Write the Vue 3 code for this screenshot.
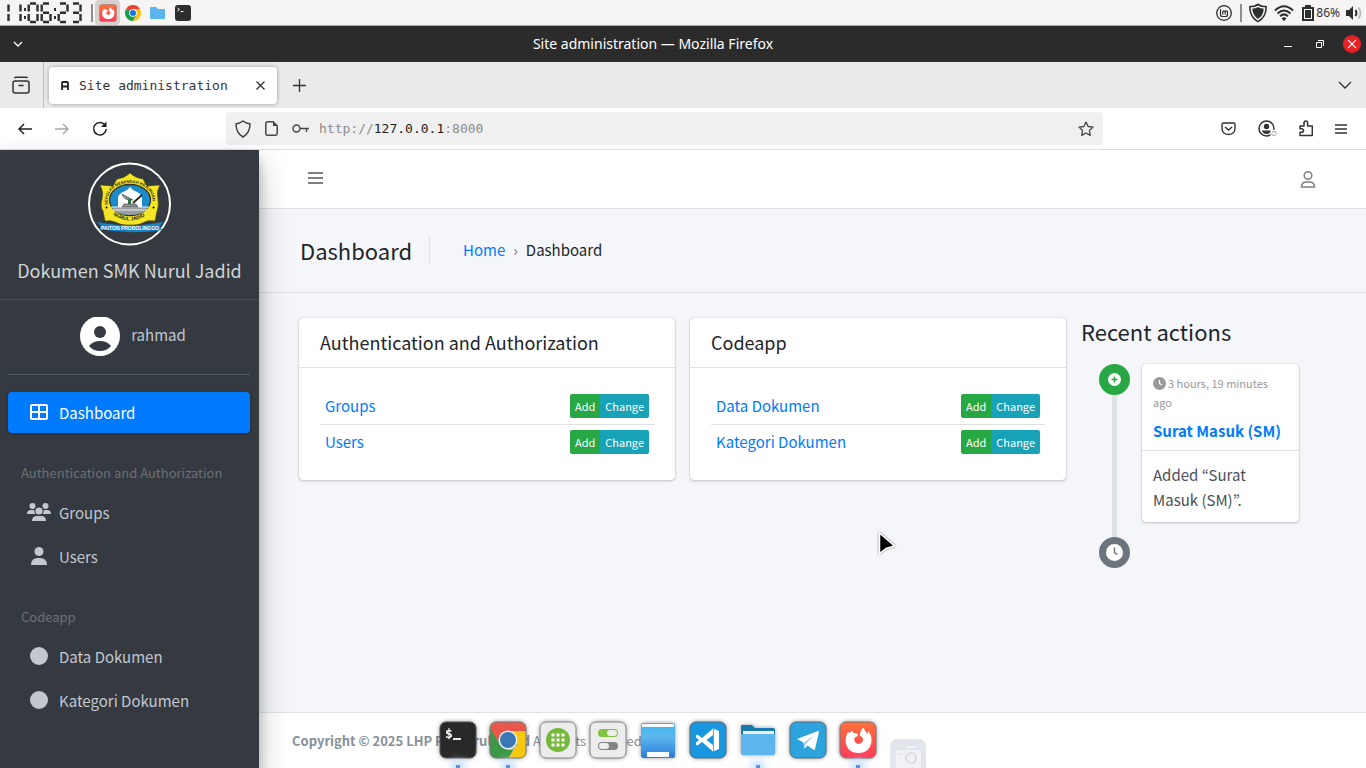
<script setup>
const digits = { 1: 'bc', 2: 'abged', 3: 'abgcd', 6: 'afgedc', 0: 'abcdef' }
const seg = {
  a: 'M2 1H8', b: 'M9.5 2V9', c: 'M9.5 11.5V18.5', d: 'M2 19.5H8',
  e: 'M0.7 11.5V18.5', f: 'M0.7 2V9', g: 'M2 10.2H8'
}
const clock = [
  { n: 1, x: -1 }, { n: 1, x: 11 }, { n: 0, x: 28 }, { n: 6, x: 41 }, { n: 2, x: 58 }, { n: 3, x: 71 }
].map(d => ({ x: d.x, d: digits[d.n].split('').map(s => seg[s]).join('') }))
const cards = [
  { title: 'Authentication and Authorization', rows: ['Groups', 'Users'] },
  { title: 'Codeapp', rows: ['Data Dokumen', 'Kategori Dokumen'] }
]
</script>

<template>
  <div class="desktop">
    <header class="panel">
      <div class="panel-left">
        <svg class="clock" width="84" height="22" viewBox="0 0 84 22" role="img" aria-label="11:06:23">
          <g fill="none" stroke="#2b2f2f" stroke-width="2.400">
            <path v-for="(c, i) in clock" :key="i" :transform="`translate(${c.x} 0.5)`" :d="c.d" />
          </g>
          <path d="M24 6h2v3h-2zM24 14h2v3h-2zM54 6h2v3h-2zM54 14h2v3h-2z" fill="#2b2f2f" />
        </svg>
        <span class="bar"></span>
        <button class="launcher on" aria-label="Firefox"><svg width="18" height="18"><use href="#firefox" /></svg></button>
        <button class="launcher" aria-label="Chrome">
          <svg width="16" height="16" viewBox="0 0 36 36">
            <path d="M18 18 2.400 9A18 18 0 0 1 33.600 9z" fill="#ea4335" />
            <path d="M18 18 2.400 9A18 18 0 0 0 18 36l8-13z" fill="#1e9e4b" />
            <path d="M18 9h15.600A18 18 0 0 1 18 36l8-13z" fill="#fbc116" />
            <circle cx="18" cy="18" r="8.600" fill="#fff" /><circle cx="18" cy="18" r="6.800" fill="#1a73e8" />
          </svg>
        </button>
        <button class="launcher" aria-label="Files">
          <svg width="15" height="12" viewBox="0 0 15 12"><path d="M0 1q0-1 1-1h5l2 2h6q1 0 1 1v8q0 1-1 1H1q-1 0-1-1z" fill="#5ab6ec" /></svg>
        </button>
        <button class="launcher" aria-label="Terminal">
          <svg width="16" height="16" viewBox="0 0 16 16"><rect width="16" height="16" rx="3" fill="#2d2d2d" /><path d="M2.500 3 4.500 4.500 2.500 6M5.500 6.500h3" fill="none" stroke="#fff" stroke-width="1" /></svg>
        </button>
      </div>
      <div class="panel-right">
        <svg width="16" height="16" viewBox="0 0 16 16" fill="none" stroke="#2b2f2f"><circle cx="8" cy="8" r="7.300" stroke-width="1.300" /><path d="M4.500 4v5.500q0 2 2 2h3q2 0 2-2V7q0-1.200-1.200-1.200T9.200 7v2.500M6.800 9.500V7q0-1.200 1.200-1.200T9.200 7" stroke-width="1.200" /></svg>
        <span class="bar"></span>
        <svg width="20" height="20" viewBox="0 0 20 20"><path d="M10 .5q4 2.500 9 2.500 0 12-9 16.500Q1 15 1 3q5 0 9-2.500z" fill="#2b2f2f" /><path d="M10 3.300q3 1.700 6.500 1.800 0 8-6.500 11.700Q3.500 13 3.500 5.100 7 5 10 3.300z" fill="none" stroke="#f6f5f4" stroke-width="1.500" /></svg>
        <svg width="20" height="18" viewBox="0 0 20 18" fill="none" stroke="#2b2f2f" stroke-width="2"><path d="M1 6.500Q10-2 19 6.500M3.500 9.500q6.500-6 13 0M6 12.200q4-3.600 8 0" /><path d="m7.500 14.200 2.500 3 2.500-3q-2.500-1.700-5 0z" fill="#2b2f2f" stroke="none" /></svg>
        <svg class="battery" width="12" height="16" viewBox="0 0 12 16"><path d="M1 3h10v12H1zM4 2V1h4v1" fill="none" stroke="#2b2f2f" stroke-width="2" /><path d="M3 5h6v8H3z" fill="#2b2f2f" /></svg>
        <span class="percent">86%</span>
        <svg width="16" height="16" viewBox="0 0 16 16"><path d="M0 5h3l4-4v14l-4-4H0z" fill="#2b2f2f" /><path d="M9.500 5q2 3 0 6" fill="none" stroke="#2b2f2f" stroke-width="2" /><path d="M12.500 2.500q4 5.500 0 11" fill="none" stroke="#bbb" stroke-width="2" /></svg>
      </div>
    </header>

    <div class="titlebar">
      <button aria-label="Window menu"><svg width="10" height="6" viewBox="0 0 10 6"><path d="m1 1 4 4 4-4" fill="none" stroke="#fff" stroke-width="1.300" /></svg></button>
      <span class="wintitle">Site administration — Mozilla Firefox</span>
      <div class="winbtns">
        <button aria-label="Minimise"><svg width="8" height="8"><path d="M0 6.500h8" stroke="#fff" /></svg></button>
        <button aria-label="Restore"><svg width="8" height="8"><path d="M.5 2.500h5v5h-5zM2 .5h5.500V6" fill="none" stroke="#fff" /></svg></button>
        <button class="close" aria-label="Close"><svg width="8" height="8"><path d="m0 0 8 8M8 0 0 8" stroke="#fff" stroke-width="1.200" /></svg></button>
      </div>
    </div>

    <div class="tabstrip">
      <button class="recent" aria-label="Recent browsing">
        <svg width="18" height="18" viewBox="0 0 18 18" fill="none" stroke="#333" stroke-width="1.500"><rect x="1" y="5" width="16" height="12" rx="2" /><path d="M2.500 2q.5-.8 1.500-.8h10q1 0 1.500.8M6.500 9.500h5" /></svg>
      </button>
      <div class="tab">
        <svg width="8" height="9" viewBox="0 0 8 9"><path d="M1 9V2q0-1 1-1h4q1 0 1 1v7M1 5.500h6" fill="none" stroke="#222" stroke-width="1.800" /></svg>
        <span>Site administration</span>
        <button aria-label="Close tab"><svg width="9" height="9"><path d="m.5.5 8 8M8.500.5l-8 8" stroke="#333" stroke-width="1.300" /></svg></button>
      </div>
      <button class="newtab" aria-label="New tab"><svg width="13" height="13"><path d="M6.500 0v13M0 6.500h13" stroke="#333" stroke-width="1.300" /></svg></button>
      <button class="alltabs" aria-label="List all tabs"><svg width="14" height="8"><path d="m1 1 6 6 6-6" fill="none" stroke="#333" stroke-width="1.400" /></svg></button>
    </div>

    <div class="toolbar">
      <div class="nav">
        <button aria-label="Back"><svg width="14" height="12" viewBox="0 0 14 12"><path d="M14 6H1M6 1 1 6l5 5" fill="none" stroke="#222" stroke-width="1.500" /></svg></button>
        <button aria-label="Forward"><svg width="14" height="12" viewBox="0 0 14 12"><path d="M0 6h13M8 1l5 5-5 5" fill="none" stroke="#aaa" stroke-width="1.500" /></svg></button>
        <button aria-label="Reload"><svg width="16" height="16" viewBox="0 0 16 16"><path d="M13 4A6.300 6.300 0 1 0 14.200 8" fill="none" stroke="#222" stroke-width="1.500" /><path d="M9 6h5.500V.5z" fill="#222" /></svg></button>
      </div>
      <div class="urlbar">
        <svg width="16" height="18" viewBox="0 0 16 18" fill="none" stroke="#444" stroke-width="1.500" stroke-linejoin="round"><path d="M8 1q3 2.500 7 2.700 0 9.300-7 13.300Q1 13 1 3.700 5 3.500 8 1z" /></svg>
        <svg width="13" height="15" viewBox="0 0 13 15"><path d="M2.500.8H8L12.200 5v7.500q0 1.700-1.700 1.700h-8q-1.700 0-1.700-1.700v-10Q.8.800 2.500.800z" fill="none" stroke="#444" stroke-width="1.500" /><path d="M8 0v5h5z" fill="#444" /></svg>
        <svg width="17" height="9" viewBox="0 0 17 9" fill="none" stroke="#444" stroke-width="1.400"><circle cx="4.500" cy="4.500" r="3.500" /><path d="M8 4.500h9M14.500 4.500V8" /></svg>
        <div class="url" role="textbox" aria-label="Address">http://<b>127.0.0.1</b>:8000</div>
        <button aria-label="Bookmark"><svg width="16" height="16" viewBox="0 0 16 16"><path d="m8 1 2.100 4.500 4.900.6-3.600 3.400.9 4.900L8 12l-4.300 2.400.9-4.900L1 6.100l4.900-.6z" fill="none" stroke="#444" stroke-width="1.300" stroke-linejoin="round" /></svg></button>
      </div>
      <div class="tools">
        <button aria-label="Pocket"><svg width="15" height="14" viewBox="0 0 15 14" fill="none" stroke="#333" stroke-width="1.400"><path d="M2.500 1h10Q14 1 14 2.500V6q0 6.500-6.500 6.500T1 6V2.500Q1 1 2.500 1z" /><path d="m4 5 3.500 3L11 5" /></svg></button>
        <button aria-label="Account"><svg width="19" height="17" viewBox="0 0 19 17"><circle cx="8.500" cy="8.500" r="7.500" fill="none" stroke="#333" stroke-width="1.500" /><circle cx="8.500" cy="6.500" r="2.700" fill="#333" /><path d="M4 10.500h9q-1 3.500-4.500 3.500T4 10.500z" fill="#333" /><circle cx="16" cy="13.500" r="3.800" fill="#fff" /><circle cx="16" cy="13.500" r="2.200" fill="none" stroke="#aaa" /></svg></button>
        <button aria-label="Extensions"><svg width="14" height="17" viewBox="0 0 14 17"><path d="M1 15.500V12.300h1.500q2 0 2-1.800t-2-1.800H1V6h4V3q0-2 1.800-2t1.800 2v3h4.700v9.500z" fill="none" stroke="#333" stroke-width="1.500" stroke-linejoin="round" /></svg></button>
        <button aria-label="Menu"><svg width="12" height="10"><path d="M0 1h12M0 5h12M0 9h12" stroke="#333" stroke-width="1.300" /></svg></button>
      </div>
    </div>

    <div class="page">
      <aside class="sidebar">
        <a class="brand" href="#">
          <svg width="84" height="84" viewBox="0 0 84 84">
            <circle cx="41.500" cy="42" r="40.500" fill="none" stroke="#fff" stroke-width="2" />
            <path d="M42 11q5 5 13 6l4 7 13-1q-4 7-2 14 1 8-1 12l-2 10q-8-1-10 1-7 4-15 3-8 1-15-3-4-2-10-1l-2-10q-3-4-1-12 2-7-2-14l13 1 4-7q8-1 13-6z" fill="#f4e622" stroke="#413f20" stroke-width=".6" />
            <ellipse cx="42" cy="38" rx="20.500" ry="15.500" fill="#1f8acb" stroke="#35351c" stroke-width="1.300" />
            <path d="M30 40q-1-8 5-10 4-1 7-5 3 4 7 5 6 2 5 10v5H30z" fill="#fff" />
            <path d="M23 45h38q-5 8-19 8t-19-8z" fill="#9a9fa3" /><path d="M23 45h38M25 48h34" stroke="#fff" stroke-width=".8" />
            <path d="m34 32 11 6q-9 1-11-6zM36 42h12l2 3H34z" fill="#8c9093" stroke="#444" stroke-width=".6" /><path d="m40 38 3-2v6h-3z" fill="#24753d" /><path d="M45 41 54 33" stroke="#222" stroke-width="1.800" />
            <circle cx="18.500" cy="45.500" r="1" /><circle cx="65.500" cy="45.500" r="1" />
            <path id="arc-top" d="M20.500 43.500A22.500 17.500 0 1 1 63.500 43.500" fill="none" /><path id="arc-bottom" d="M21 50Q42 67 63 50" fill="none" />
            <text class="arc"><textPath href="#arc-top" startOffset="1">SEKOLAH MENENGAH KEJURUAN</textPath></text>
            <text class="arc low"><textPath href="#arc-bottom" startOffset="5">NURUL JADID</textPath></text>
            <path d="m9 60 9 1.500q24 4 48 0l9-1.500-3 4 2 4q-30 5-63-1l2-3z" fill="#1684ca" />
            <text class="ribbon" x="42" y="68">PAITON PROBOLINGGO</text>
          </svg>
          <span>Dokumen SMK Nurul Jadid</span>
        </a>
        <div class="user">
          <svg width="40" height="40" viewBox="0 0 40 40"><circle cx="20" cy="19" r="20" fill="#fff" /><circle cx="20" cy="15" r="6" fill="#343a40" /><path d="M9 29q4-5 11-5t11 5q-4 5-11 5T9 29z" fill="#343a40" /></svg>
          <a href="#">rahmad</a>
        </div>
        <nav class="menu">
          <a class="active" href="#"><svg width="20" height="18" viewBox="0 0 20 18"><path d="M3 2h14q1 0 1 1v12q0 1-1 1H3q-1 0-1-1V3q0-1 1-1zM2 9h16M10 2v14" fill="none" stroke="#fff" stroke-width="2" /></svg>Dashboard</a>
          <h6>Authentication and Authorization</h6>
          <a href="#"><svg width="24" height="18" viewBox="0 0 24 18" fill="#c2c7d0"><circle cx="5.500" cy="3" r="3" /><circle cx="18.500" cy="3" r="3" /><circle cx="12" cy="8" r="3.600" /><path d="M0 11q0-4 4-4h2q2 0 1.500 2 0 1 1 2zM24 11q0-4-4-4h-2q-2 0-1.500 2 0 1-1 2zM5 18q0-5 5-5h4q5 0 5 5z" /></svg>Groups</a>
          <a href="#"><svg width="16" height="18" viewBox="0 0 16 18" fill="#c2c7d0"><circle cx="8" cy="4.500" r="4.500" /><path d="M0 18q0-7 7-7h2q7 0 7 7z" /></svg>Users</a>
          <h6>Codeapp</h6>
          <a href="#"><svg width="18" height="18"><circle cx="9" cy="9" r="9" fill="#c2c7d0" /></svg>Data Dokumen</a>
          <a href="#"><svg width="18" height="18"><circle cx="9" cy="9" r="9" fill="#c2c7d0" /></svg>Kategori Dokumen</a>
        </nav>
      </aside>

      <div class="content">
        <div class="topnav">
          <button aria-label="Toggle sidebar"><svg width="15" height="14"><path d="M0 1h15M0 6h15M0 11h15" stroke="#808080" stroke-width="2" /></svg></button>
          <button aria-label="Profile"><svg width="16" height="18" viewBox="0 0 16 18" fill="none" stroke="#808080" stroke-width="1.500"><circle cx="8" cy="5.500" r="3.800" /><path d="M1.500 17q0-5 5-5h3q5 0 5 5z" /></svg></button>
        </div>
        <div class="heading">
          <h1>Dashboard</h1>
          <div class="crumbs"><a href="#">Home</a><i>›</i><span>Dashboard</span></div>
        </div>
        <main>
          <section v-for="c in cards" :key="c.title" class="card">
            <h2>{{ c.title }}</h2>
            <table>
              <tbody>
                <tr v-for="r in c.rows" :key="r">
                  <td><a href="#">{{ r }}</a></td>
                  <td class="actions"><div class="pair"><a class="add" href="#">Add</a><a class="change" href="#">Change</a></div></td>
                </tr>
              </tbody>
            </table>
          </section>
          <section class="history">
            <h3>Recent actions</h3>
            <div class="timeline">
              <div class="rail">
                <svg width="31" height="31" viewBox="0 0 31 31"><circle cx="15.500" cy="15.500" r="15.500" fill="#28a745" /><circle cx="15.500" cy="15.500" r="6.500" fill="#fff" /><path d="M15.500 12.500v6M12.500 15.500h6" stroke="#28a745" stroke-width="1.500" /></svg>
                <span></span>
                <svg width="31" height="31" viewBox="0 0 31 31"><circle cx="15.500" cy="15.500" r="15.500" fill="#6c757d" /><circle cx="15.500" cy="15.500" r="8.500" fill="#fff" /><path d="M15.500 10.500v5l3 2" fill="none" stroke="#6c757d" stroke-width="1.500" /></svg>
              </div>
              <article>
                <div class="time"><svg width="13" height="13" viewBox="0 0 13 13"><circle cx="6.500" cy="6.500" r="6.500" fill="#999" /><path d="M6.500 3v3.500L9 8" fill="none" stroke="#fff" stroke-width="1.300" /></svg>3 hours, 19 minutes ago</div>
                <h4><a href="#">Surat Masuk (SM)</a></h4>
                <p>Added “Surat Masuk (SM)”.</p>
              </article>
            </div>
          </section>
        </main>
        <footer><b>Copyright © 2025 LHP PP Nurul Jadid</b> All rights reserved.</footer>
      </div>
    </div>

    <div class="dock">
      <button class="run" aria-label="Terminal"><svg width="38" height="38" viewBox="0 0 38 38"><rect x="1" y="1" width="36" height="36" rx="6" fill="#282828" stroke="#555" /><path d="M14 18h8" stroke="#fff" stroke-width="1.800" /><text class="prompt" x="6" y="17">$</text></svg></button>
      <button class="run" aria-label="Chrome">
        <svg width="38" height="38" viewBox="0 0 38 38"><defs><clipPath id="round"><rect x="1" y="1" width="36" height="36" rx="6" /></clipPath></defs>
          <g clip-path="url(#round)"><path d="M0 0h38v11H19L9 20 0 6z" fill="#e8564c" /><path d="M0 5 10 22l9 7 5 0-5 9H0z" fill="#3c9847" /><path d="M19 10h19v28H19l9-15z" fill="#f7c80e" /></g>
          <circle cx="19" cy="19" r="9.500" fill="#f0f2f5" /><circle cx="19" cy="19" r="8" fill="#3a78b5" /><rect x="1" y="1" width="36" height="36" rx="6" fill="none" stroke="#777" /></svg>
      </button>
      <button aria-label="Applications"><svg width="38" height="38" viewBox="0 0 38 38"><rect x="1" y="1" width="36" height="36" rx="6" fill="#ececec" stroke="#888" /><circle cx="19" cy="19" r="12" fill="#74b93c" /><path d="M12.500 14h13M12.500 19h13M12.500 24h13" stroke="#fff" stroke-width="3" stroke-dasharray="3 2" /></svg></button>
      <button aria-label="Settings"><svg width="38" height="38" viewBox="0 0 38 38"><rect x="1" y="1" width="36" height="36" rx="6" fill="#ececec" stroke="#888" /><rect x="9" y="8" width="20" height="8" rx="4" fill="#80c342" /><rect x="18" y="9" width="10" height="6" rx="3" fill="#eee" /><rect x="9" y="21" width="20" height="8" rx="4" fill="#858585" /><rect x="10" y="22" width="10" height="6" rx="3" fill="#eee" /></svg></button>
      <button aria-label="Show desktop"><svg width="38" height="38" viewBox="0 0 38 38"><defs><linearGradient id="sky" x1="0" y1="0" x2="0" y2="1"><stop offset="0" stop-color="#41b5ea" /><stop offset=".4" stop-color="#5ab8ee" /><stop offset="1" stop-color="#2f7bd8" /></linearGradient></defs><rect x="2" y="2" width="34" height="35" rx="2" fill="url(#sky)" /><path d="M3 3h32v3H3zM8 31h22v5H8z" fill="#f6fbff" /></svg></button>
      <button aria-label="Visual Studio Code"><svg width="38" height="38" viewBox="0 0 38 38"><rect x="1" y="1" width="36" height="36" rx="6" fill="#1996e0" stroke="#526777" /><path d="M24 7.500 30 10v18l-6 2.500L13 21l-4.500 3.500L7 23.500v-2l3-2.500-3-2.500v-2l1.500-1L13 17zM24 14l-6.500 5 6.500 5z" fill="#fff" fill-rule="evenodd" /><path d="M24.500 8v22" stroke="#1996e0" stroke-width=".8" /></svg></button>
      <button class="run" aria-label="Files"><svg width="38" height="38" viewBox="0 0 38 38"><path d="M2 5q0-1 1-1h10l3 3h18q2 0 2 2v20H2z" fill="#1a79ad" /><path d="M4 10h31v10H4z" fill="#eee" /><path d="M2 14q0-1 1-1h32q1 0 1 1v18q0 2-2 2H4q-2 0-2-2z" fill="#5ab6ec" /></svg></button>
      <button aria-label="Telegram"><svg width="38" height="38" viewBox="0 0 38 38"><rect x="1" y="1" width="36" height="36" rx="6" fill="#2ca3dc" stroke="#57707e" /><path d="m8 18 21-8q1 0 1 1l-4 17q-.5 1.500-2 .5l-5.500-4-3 3-1-6z" fill="#fff" /><path d="m14.500 22 10.500-8-8 9-2 4z" fill="#a9cfe6" /></svg></button>
      <button class="run" aria-label="Firefox">
        <svg width="38" height="38" viewBox="0 0 38 38"><defs><linearGradient id="fire" x1="0" y1="0" x2="0" y2="1"><stop offset="0" stop-color="#ff7139" /><stop offset="1" stop-color="#ff3b5c" /></linearGradient>
          <symbol id="firefox" viewBox="0 0 38 38"><rect x="1" y="1" width="36" height="36" rx="6" fill="url(#fire)" stroke="#777" /><path d="M9 11q1 0 1.500 1.500 1-2 3-3 0 2.500 1.500 2.500l3 .5 1 1.500q-.3 1.700-2.500 2-2 1.500-1 4 1.500 3.500 4.500 3 4-1 4-4.500 0-2.500-3-3.500-.5-5 3.500-8.500 1 4 4.500 6.500V10q4 4.500 3.500 10-1.500 12-13 12T6.500 20q0-5 2.500-9z" fill="#fff" /></symbol></defs><use href="#firefox" /></svg>
      </button>
      <button class="faded" aria-label="Screenshot"><svg width="38" height="38" viewBox="0 0 38 38"><rect x="1" y="1" width="36" height="37" rx="7" fill="#e2e5eb" /><rect x="7" y="12" width="25" height="18" rx="2" fill="#f1f2f5" /><path d="M17 9h10" stroke="#f1f2f5" stroke-width="2" /><circle cx="22" cy="20" r="5" fill="none" stroke="#dadde5" stroke-width="2" /><path d="M10 16h4" stroke="#dadde5" /></svg></button>
    </div>

    <svg class="pointer" width="20" height="26" viewBox="0 0 20 26"><path d="M2.500 2v20.500l6.500-5 8.500-2.500z" fill="#000" stroke="#fff" stroke-width="1.500" stroke-linejoin="round" /></svg>
  </div>
</template>

<style>
html, body { margin: 0; height: 100%; }
#app { height: 100%; }
</style>

<style scoped>
.desktop { display: flex; flex-direction: column; min-height: 100vh; position: relative; overflow: hidden; font-family: "Noto Sans CJK JP", "Noto Sans", sans-serif; font-size: 15px; line-height: 24px; color: #212529; background: #fff; }
* { box-sizing: border-box; }
svg { display: block; flex-shrink: 0; }
button { border: 0; padding: 0; background: none; display: flex; align-items: center; justify-content: center; }
a { color: #007bff; text-decoration: none; }
h1, h2, h3, h4, h6, p { margin: 0; font-weight: 400; }

.panel { height: 26px; background: #f6f5f4; border-bottom: 1px solid #aaa; display: flex; justify-content: space-between; }
.panel-left, .panel-right { display: flex; align-items: center; }
.bar { width: 2px; height: 18px; background: #8f8f8f; }
.clock { margin-right: 7px; }
.launcher { width: 25px; height: 25px; }
.launcher.on { background: #d6d1cd; border-radius: 4px; margin-left: 2px; }
.panel-right { padding-right: 4px; }
.panel-right > * { margin-left: 6px; }
.panel-right > .bar { margin-left: 8px; }
.panel-right > .battery { margin-left: 8px; }
.panel-right > .percent { margin-left: 2px; font: 12px "Noto Sans", sans-serif; color: #333; }

.titlebar { height: 36px; background: #2b2b2b; display: grid; grid-template-columns: 1fr auto 1fr; align-items: center; padding: 0 5px 0 13px; }
.titlebar > button { justify-self: start; }
.wintitle { color: #fff; font: 14px/18px "Noto Sans", sans-serif; margin-right: 68px; }
.winbtns { justify-self: end; display: flex; align-items: center; gap: 14px; }
.winbtns button { width: 18px; height: 18px; border-radius: 50%; }
.winbtns .close { background: #e92228; }

.tabstrip { height: 46px; background: #eaeaea; display: flex; align-items: center; }
.recent { width: 44px; height: 46px; border-right: 1px solid #bbb; padding-right: 2px; }
.tab { margin: 0 0 0 5px; width: 228px; height: 37px; border-radius: 4px; background: #fff; box-shadow: 0 0 4px #0005; display: flex; align-items: center; padding: 0 12px; font: 13px "DejaVu Sans Mono", monospace; color: #333; }
.tab span { margin-left: 10px; flex: 1; }
.newtab { margin-left: 16px; }
.alltabs { margin: 0 14px 0 auto; }

.toolbar { height: 42px; background: #fff; border-bottom: 1px solid #ddd; display: flex; align-items: center; }
.nav { display: flex; gap: 23px; width: 226px; padding-left: 18px; }
.urlbar { flex: 1; height: 33px; border-radius: 4px; background: #f0f0f0; display: flex; align-items: center; padding: 0 9px; gap: 14px; }
.url { flex: 1; margin-left: -4px; font: 13px "DejaVu Sans Mono", monospace; color: #8c8c8c; }
.url b { color: #222; font-weight: 400; }
.tools { display: flex; align-items: center; justify-content: flex-end; gap: 22px; width: 263px; padding-right: 19px; }

.page { flex: 1; display: flex; background: #f4f6f9; }
.sidebar { width: 259px; background: #343a40; z-index: 1; box-shadow: 0 14px 28px rgba(0,0,0,.25), 0 10px 10px rgba(0,0,0,.22); }
.brand { display: flex; flex-direction: column; align-items: center; height: 150px; padding-top: 12px; border-bottom: 1px solid #4b545c; color: #d0d3d6; font-size: 18px; white-space: nowrap; }
.brand span { margin-top: 12px; }
.arc { font: bold 4px "Liberation Sans", sans-serif; fill: #222; }
.arc.low { font-size: 5px; }
.ribbon { font: bold 5px "Liberation Sans", sans-serif; fill: #fff; text-anchor: middle; }
.user { margin: 0 9px 17px 8px; height: 75px; border-bottom: 1px solid #4f5962; display: flex; justify-content: center; align-items: flex-start; gap: 11px; padding: 17px 0 0 8px; }
.user a { color: #c2c7d0; line-height: 35px; }
.menu { padding: 0 9px 0 8px; }
.menu a { height: 41px; margin-bottom: 3px; display: flex; align-items: center; color: #c2c7d0; position: relative; padding-left: 51px; border-radius: 4px; }
.menu a svg { position: absolute; left: 31px; top: 11px; transform: translateX(-50%); }
.menu a.active { background: #007bff; color: #fff; box-shadow: 0 1px 3px rgba(0,0,0,.3); }
.menu h6 { font-size: 13px; color: #6c7073; padding: 23px 0 6px 13px; line-height: 27px; }

.content { flex: 1; min-width: 0; display: flex; flex-direction: column; }
.topnav { height: 59px; background: #fff; border-bottom: 1px solid #dee2e6; display: flex; justify-content: space-between; padding: 0 50px 0 49px; }
.heading { height: 84px; border-bottom: 1px solid #dee2e6; display: flex; align-items: center; padding: 0 0 2px 41px; }
h1 { font-size: 22px; line-height: 28px; padding-right: 17px; border-right: 1px solid #dee2e6; }
.crumbs { margin-left: 33px; display: flex; gap: 8px; }
.crumbs i { font-style: normal; color: #6c757d; }
main { flex: 1; display: grid; grid-template-columns: minmax(0, 376fr) minmax(0, 376fr) minmax(0, 218fr); gap: 15px; padding: 25px 67px 25px 40px; align-items: start; }
.card { background: #fff; border-radius: 4px; box-shadow: 0 0 1px rgba(0,0,0,.3), 0 1px 3px rgba(0,0,0,.2); padding-bottom: 21px; }
h2 { font-size: 18px; line-height: 26px; padding: 11px 21px 12px; border-bottom: 1px solid #dee2e6; }
table { width: calc(100% - 42px); margin: 21px 21px 0; border-collapse: collapse; }
td { height: 35px; padding: 0 5px; }
tr + tr td { border-top: 1px solid #dee2e6; }
.pair { display: flex; justify-content: flex-end; font-size: 11px; }
.pair a { color: #fff; padding: 0 5px; }
.add { background: #28a745; border-radius: 2px 0 0 2px; }
.change { background: #17a2b8; border-radius: 0 2px 2px 0; }
h3 { font-size: 22px; line-height: 26px; }
.timeline { display: flex; margin-top: 20px; padding-left: 18px; gap: 12px; }
.rail { display: flex; flex-direction: column; align-items: center; height: 204px; }
.rail span { width: 5px; flex: 1; background: #dee2e6; }
article { flex: 1; align-self: flex-start; background: #fff; border-radius: 4px; box-shadow: 0 0 1px rgba(0,0,0,.3), 0 1px 3px rgba(0,0,0,.2); color: #495057; }
.time { color: #999; font-size: 11px; line-height: 19px; padding: 10px 11px 0; }
.time svg { display: inline-block; vertical-align: -2px; margin-right: 2px; }
h4 { font-size: 15px; padding: 7px 11px 8px; line-height: 23px; border-bottom: 1px solid #dee2e6; }
h4 a { font-weight: 700; }
article p { padding: 11px 11px 10px; line-height: 25px; }
footer { height: 56px; background: #fff; border-top: 1px solid #dee2e6; color: #869099; font-size: 13px; line-height: 56px; padding-left: 33px; }

.dock { position: absolute; left: 439px; bottom: 0; height: 47px; display: flex; gap: 12px; z-index: 2; }
.dock button { width: 38px; height: 47px; align-items: flex-start; position: relative; }
.dock svg { filter: drop-shadow(0 0 2px rgba(0,0,0,.4)); }
.dock .run::after { content: ""; position: absolute; left: 17px; bottom: 0; width: 4px; height: 3px; background: #5c93dd; box-shadow: 0 0 8px 4px #bdd7ff; }
.dock .faded { padding-top: 17px; overflow: hidden; }
.dock .faded svg { filter: none; }
.prompt { font: bold 13px "DejaVu Sans Mono", monospace; fill: #fff; }
.pointer { position: absolute; left: 877px; top: 531px; z-index: 3; filter: drop-shadow(0 0 1px rgba(0,0,0,.5)); }
</style>
